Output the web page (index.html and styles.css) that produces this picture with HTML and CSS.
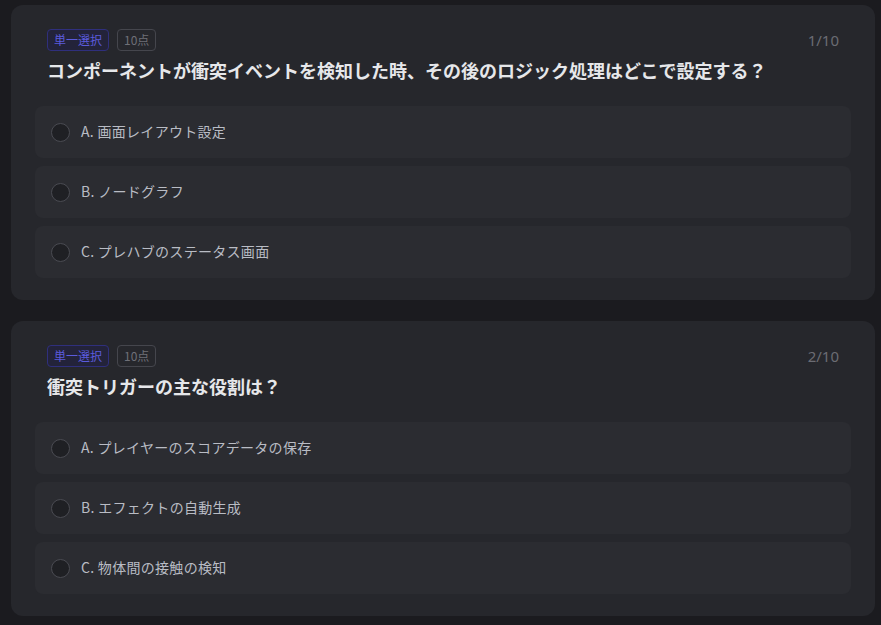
FILE: index.html
```html
<!DOCTYPE html>
<html lang="ja">
<head>
<meta charset="utf-8">
<link rel="stylesheet" href="styles.css">
</head>
<body>
<div class="list">
  <section class="card">
    <div class="head">
      <div class="tags"><span class="tag tag-type">単一選択</span><span class="tag tag-score">10点</span></div>
      <span class="count">1/10</span>
    </div>
    <h2 class="title">コンポーネントが衝突イベントを検知した時、その後のロジック処理はどこで設定する？</h2>
    <div class="options">
      <div class="option"><span class="radio"></span><span class="label">A. 画面レイアウト設定</span></div>
      <div class="option"><span class="radio"></span><span class="label">B. ノードグラフ</span></div>
      <div class="option"><span class="radio"></span><span class="label">C. プレハブのステータス画面</span></div>
    </div>
  </section>
  <section class="card">
    <div class="head">
      <div class="tags"><span class="tag tag-type">単一選択</span><span class="tag tag-score">10点</span></div>
      <span class="count">2/10</span>
    </div>
    <h2 class="title">衝突トリガーの主な役割は？</h2>
    <div class="options">
      <div class="option"><span class="radio"></span><span class="label">A. プレイヤーのスコアデータの保存</span></div>
      <div class="option"><span class="radio"></span><span class="label">B. エフェクトの自動生成</span></div>
      <div class="option"><span class="radio"></span><span class="label">C. 物体間の接触の検知</span></div>
    </div>
  </section>
</div>
</body>
</html>
```
FILE: styles.css
```css
html, body {
  margin: 0;
  padding: 0;
  background: #1b1b1f;
}
body {
  font-family: "Noto Sans CJK JP", "Noto Sans", sans-serif;
  width: 881px;
  height: 625px;
  overflow: hidden;
}
.list {
  display: flex;
  flex-direction: column;
  gap: 21px;
  padding: 5px 6px 0 11px;
}
.card {
  background: #26272c;
  border-radius: 12px;
  padding: 24px 24px 23px 24px;
  height: 295px;
  box-sizing: border-box;
}
.head {
  display: flex;
  justify-content: space-between;
  align-items: center;
  padding: 0 12px;
  height: 22px;
}
.tags {
  display: flex;
  gap: 8px;
}
.tag {
  display: inline-flex;
  align-items: center;
  height: 22px;
  box-sizing: border-box;
  padding: 0 6px;
  border-radius: 4px;
  font-size: 12px;
  line-height: 1;
}
.tag-type {
  color: #5b5bdc;
  border: 1px solid #2f2f7c;
  background: #23233a;
}
.tag-score {
  color: #6f7078;
  border: 1px solid #45464d;
}
.count {
  color: #6b6c73;
  font-size: 15px;
  font-family: "Noto Sans", sans-serif;
}
.title {
  margin: 7px 0 0;
  padding: 0 12px;
  font-size: 18px;
  font-weight: 700;
  line-height: 24px;
  color: #e6e7ea;
}
.options {
  display: flex;
  flex-direction: column;
  gap: 8px;
  margin-top: 24px;
}
.option {
  display: flex;
  align-items: center;
  height: 52px;
  background: #2b2c31;
  border-radius: 8px;
  padding: 0 16px;
  gap: 11px;
}
.radio {
  width: 17px;
  height: 17px;
  border-radius: 50%;
  border: 1px solid #4a4b52;
  background: #1f2024;
  flex: none;
}
.label {
  font-size: 14px;
  letter-spacing: 0.3px;
  color: #b9bcc4;
  padding-bottom: 3px;
}
```
